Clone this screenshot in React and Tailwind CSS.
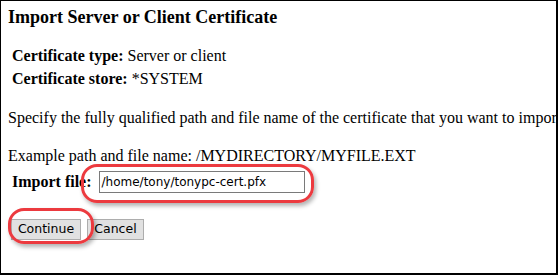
export default function App() {
  return (
    <div className="relative w-[558px] h-[275px] overflow-hidden bg-white border-l border-t border-r-2 border-b-2 border-black font-['Liberation_Serif',serif] text-black">
      <h1 className="ml-[7px] mt-[5px] text-[18px] leading-[22px] font-bold">Import Server or Client Certificate</h1>

      {/* Certificate info */}
      <div className="ml-[11px] mt-[18px] flex flex-col gap-[3px] text-[16px] leading-[20px]">
        <div><span className="font-bold">Certificate type:</span> Server or client</div>
        <div><span className="font-bold">Certificate store:</span> *SYSTEM</div>
      </div>

      <p className="ml-[7px] mt-[19px] text-[16px] leading-[20px] whitespace-nowrap">
        Specify the fully qualified path and file name of the certificate that you want to impor
      </p>
      <p className="ml-[7px] mt-[18px] text-[16px] leading-[20px] whitespace-nowrap">
        Example path and file name: /MYDIRECTORY/MYFILE.EXT
      </p>

      {/* Import file row */}
      <div className="ml-[11px] mt-[5px] flex items-center gap-[7px]">
        <span className="font-bold text-[16px] leading-[20px]">Import file:</span>
        <div className="w-[206px] h-[22px] border border-[#7a7a7a] flex items-center px-[2px] font-['DejaVu_Sans',sans-serif] text-[12px] text-black">
          /home/tony/tonypc-cert.pfx
        </div>
      </div>

      {/* Buttons */}
      <div className="ml-[10px] mt-[26px] flex items-center gap-[6px] font-['DejaVu_Sans',sans-serif] text-[12.5px]">
        <button className="w-[70px] h-[21px] bg-[#e1e1e1] border border-[#adadad]">Continue</button>
        <button className="w-[57px] h-[21px] bg-[#e1e1e1] border border-[#adadad]">Cancel</button>
      </div>

      {/* Callout ovals */}
      <div className="absolute left-[80px] top-[163px] w-[233px] h-[39px] rounded-[16px] border-[3px] border-[#ec3a3f] shadow-[2px_3px_4px_rgba(0,0,0,0.3)]" />
      <div className="absolute left-[7px] top-[207px] w-[86px] h-[36px] rounded-[16px] border-[3px] border-[#ec3a3f] shadow-[2px_3px_4px_rgba(0,0,0,0.3)]" />
    </div>
  );
}
